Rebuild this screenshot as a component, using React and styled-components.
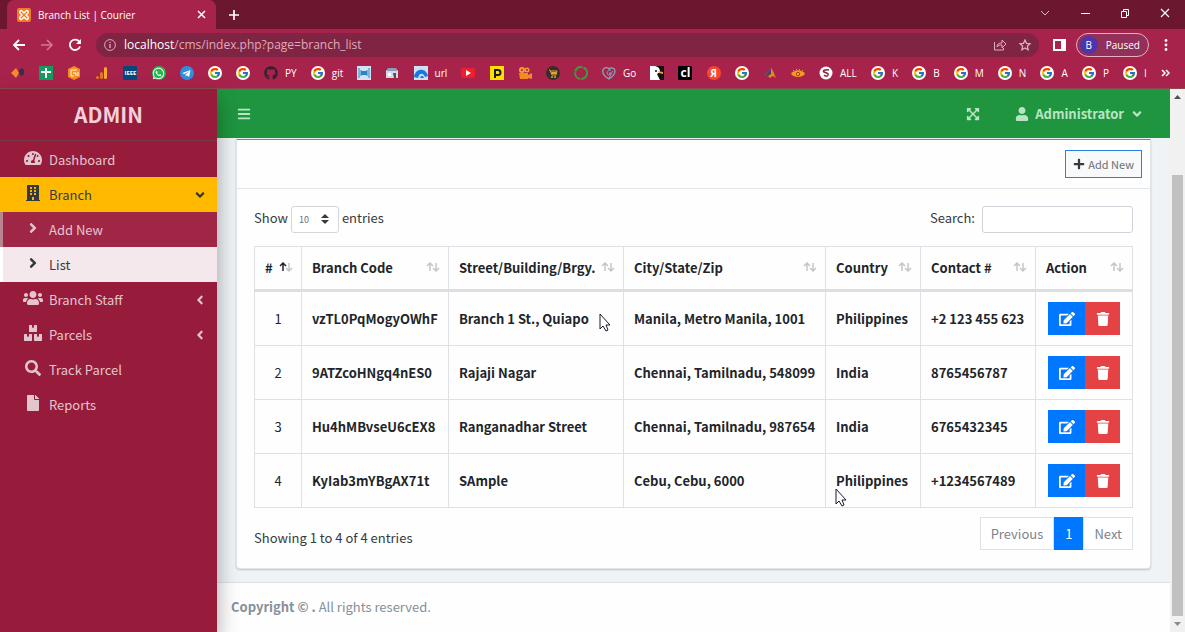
import React from "react";
import styled, { createGlobalStyle } from "styled-components";
import {
  FaAngleDown,
  FaAngleLeft,
  FaAngleRight,
  FaBars,
  FaBoxes,
  FaBuilding,
  FaEdit,
  FaExpandArrowsAlt,
  FaFile,
  FaGithub,
  FaPlus,
  FaSearch,
  FaTachometerAlt,
  FaTelegramPlane,
  FaTrash,
  FaUser,
  FaUsers,
  FaWhatsapp,
} from "react-icons/fa";
import { FcGoogle } from "react-icons/fc";

const GlobalStyle = createGlobalStyle`
  * {
    box-sizing: border-box;
  }
  body {
    margin: 0;
    font-family: "Noto Sans CJK SC", "Noto Sans", sans-serif;
    font-size: 13px;
    line-height: 20px;
    color: #343a40;
  }
  button, input, select {
    font-family: inherit;
    margin: 0;
  }
  a {
    text-decoration: none;
    color: inherit;
  }
`;

const Page = styled.div`
  min-height: 100vh;
  display: flex;
  flex-direction: column;
  position: relative;
  overflow: hidden;
`;

/* browser window */

const Chrome = styled.header`
  background-color: #a8234b;
  border-bottom: 1px solid #8c4a50;
  color: #fff;
  font-family: "Open Sans", "Noto Sans", sans-serif;
  font-size: 10px;
  line-height: 16px;
`;
const TitleBar = styled.div`
  display: flex;
  align-items: center;
  height: 29px;
  padding: 0 15px 0 7px;
  background-color: #6b172f;
`;
const Tab = styled.div`
  display: flex;
  align-items: center;
  gap: 7px;
  width: 209px;
  height: 29px;
  padding: 0 10px;
  border-radius: 7px 7px 0 0;
  background-color: #a8234b;
`;
const TabTitle = styled.span`
  flex: 1;
`;
const IconButton = styled.button`
  display: flex;
  align-items: center;
  justify-content: center;
  padding: 0;
  border: none;
  background: none;
  color: ${(props) => props.$color || "#fff"};
  cursor: pointer;
`;
const NewTab = styled(IconButton)`
  margin-left: 12px;
`;
const WindowControls = styled.div`
  display: flex;
  align-items: center;
  gap: 30px;
  margin-left: auto;
  margin-bottom: 4px;
`;
const Toolbar = styled.div`
  display: flex;
  align-items: center;
  gap: 14px;
  height: 32px;
  padding: 0 14px 0 12px;
`;
const AddressBar = styled.div`
  flex: 1;
  display: flex;
  align-items: center;
  gap: 8px;
  height: 24px;
  padding: 0 4px 0 8px;
  border-radius: 12px;
  background-color: #7f2443;
  color: #e0a9ba;
`;
const Address = styled.span`
  flex: 1;
  font-size: 12px;

  b {
    color: #fff;
    font-weight: 400;
  }
`;
const ToolbarRight = styled.div`
  display: flex;
  align-items: center;
  gap: 10px;
`;
const Profile = styled.button`
  display: flex;
  align-items: center;
  gap: 8px;
  height: 24px;
  padding: 0 8px 0 3px;
  border: 1px solid #e3b3c2;
  border-radius: 12px;
  background-color: #93305a;
  color: #fff;
  font-size: 10px;
`;
const Avatar = styled.span`
  width: 18px;
  height: 18px;
  border-radius: 50%;
  background-color: #4c35ad;
  font-size: 10px;
  line-height: 18px;
`;
const Bookmarks = styled.nav`
  display: flex;
  align-items: center;
  justify-content: space-between;
  height: 27px;
  padding: 0 15px 3px 11px;
`;
const Bookmark = styled.a`
  display: flex;
  align-items: center;
  gap: 7px;
`;
const Badge = styled.span`
  display: flex;
  align-items: center;
  justify-content: center;
  width: 14px;
  height: 14px;
  border-radius: ${(props) => (props.$round ? "50%" : "1px")};
  background-color: ${(props) => props.$bg || "transparent"};
  color: ${(props) => props.$color || "#fff"};
  font-size: ${(props) => props.$size || 11}px;
  font-weight: 700;
  line-height: 14px;
`;

/* application */

const Shell = styled.div`
  flex: 1;
  display: flex;
`;
const Sidebar = styled.aside`
  width: 217px;
  flex-shrink: 0;
  position: relative;
  z-index: 2;
  background-color: #971b3a;
  color: #e3c5ce;
  box-shadow: 0 10px 20px rgba(0, 0, 0, 0.35);
`;
const Brand = styled.h1`
  margin: 0 0 1px;
  height: 52px;
  border-bottom: 1px solid #793c47;
  color: #f3cfda;
  font-size: 21px;
  font-weight: 700;
  line-height: 50px;
  text-align: center;
`;
const NavList = styled.ul`
  margin: 0;
  padding: 0;
  list-style: none;
`;
const NavLink = styled.a`
  display: flex;
  align-items: center;
  gap: 6px;
  height: 35px;
  padding: 0 10px 0 23px;
  background-color: ${(props) => (props.$open ? "#ffba00" : "transparent")};
  color: ${(props) => (props.$open ? "#343a40" : "inherit")};
`;
const SubLink = styled(NavLink)`
  padding-left: 20px;
  border-left: 3px solid ${(props) => (props.$active ? "#fff" : "#b98591")};
  background-color: ${(props) => (props.$active ? "#f5e8ec" : "#9f2644")};
  color: ${(props) => (props.$active ? "#343a40" : "#e3c5ce")};
`;
const NavIcon = styled.span`
  display: flex;
  justify-content: center;
  width: 20px;
  margin-bottom: 3px;
  font-size: 16px;
`;
const NavText = styled.span`
  flex: 1;
`;
const Main = styled.main`
  flex: 1;
  min-width: 0;
  display: flex;
  flex-direction: column;
  background-color: #eff3f6;
`;
const Navbar = styled.div`
  display: flex;
  align-items: center;
  gap: 35px;
  height: 49px;
  padding: 0 26px 0 20px;
  background-color: #1f953f;
`;
const MenuButton = styled(IconButton)`
  margin-right: auto;
`;
const UserMenu = styled(IconButton)`
  gap: 6px;
  font-size: 13px;
  font-weight: 700;
`;
const Content = styled.section`
  padding: 1px 19px 13px;
`;
const Card = styled.div`
  border: 1px solid #dfe4e8;
  border-top: 1px solid #3d92d8;
  border-radius: 0 0 4px 4px;
  background-color: #fefefe;
  box-shadow: 0 1px 2px rgba(0, 0, 0, 0.2);
`;
const CardHeader = styled.div`
  display: flex;
  justify-content: flex-end;
  padding: 10px 8px;
  border-bottom: 1px solid #e4e7e9;
`;
const AddButton = styled.button`
  display: flex;
  align-items: center;
  gap: 3px;
  height: 28px;
  padding: 0 7px;
  border: 1px solid #2684e0;
  background-color: #f8f9fa;
  color: #6a6f74;
  font-size: 11px;
  line-height: 16px;

  svg {
    color: #343a40;
  }
`;
const CardBody = styled.div`
  padding: 17px 17px 18px;
`;
const Controls = styled.div`
  display: flex;
  justify-content: space-between;
  margin-bottom: 13px;
`;
const Field = styled.label`
  display: flex;
  gap: ${(props) => props.$gap || 3}px;
  line-height: 24px;
`;
const SelectBox = styled.span`
  display: flex;
  position: relative;

  svg {
    position: absolute;
    right: 10px;
    top: 8px;
    pointer-events: none;
  }
`;
const Select = styled.select`
  appearance: none;
  width: 48px;
  height: 27px;
  padding: 0 7px;
  border: 1px solid #d3d7db;
  border-radius: 3px;
  background-color: #fff;
  color: #6a6f74;
  font-size: 9px;
`;
const SearchInput = styled.input`
  width: 151px;
  height: 27px;
  border: 1px solid #ced4da;
  border-radius: 3px;
  background-color: #fff;
`;
const Table = styled.table`
  width: 100%;
  table-layout: fixed;
  border-collapse: collapse;
  border: 1px solid #dee2e6;
  color: #212529;
`;
const Col = styled.col`
  width: ${(props) => props.$width}px;
`;
const Th = styled.th`
  height: 44px;
  padding: 0 8px 0 10px;
  border: 1px solid #dee2e6;
  border-bottom: 3px solid #dcdfe1;
  text-align: left;
  white-space: nowrap;
`;
const ThInner = styled.span`
  display: flex;
  align-items: center;
  justify-content: space-between;
`;
const Td = styled.td`
  padding: 10px;
  border: 1px solid #dee2e6;
  font-weight: ${(props) => (props.$center ? 400 : 700)};
  text-align: ${(props) => (props.$center ? "center" : "left")};
  white-space: nowrap;
`;
const Actions = styled.div`
  display: flex;
  justify-content: center;
`;
const ActionButton = styled.button`
  display: flex;
  align-items: center;
  justify-content: center;
  width: ${(props) => (props.$danger ? 35 : 37)}px;
  height: 33px;
  padding: 0;
  border: none;
  background-color: ${(props) => (props.$danger ? "#e54245" : "#0077ff")};
  color: #fff;
  font-size: ${(props) => (props.$danger ? 14 : 16)}px;
  cursor: pointer;
`;
const TableFooter = styled.div`
  display: flex;
  align-items: center;
  justify-content: space-between;
  margin-top: 9px;
`;
const Info = styled.span`
  padding-top: 8px;
`;
const Pagination = styled.div`
  display: flex;
`;
const PageButton = styled.button`
  height: 33px;
  padding: 0 10px;
  border: 1px solid ${(props) => (props.$active ? "#0077ff" : "#dee2e6")};
  background-color: ${(props) => (props.$active ? "#0077ff" : "#fff")};
  color: ${(props) => (props.$active ? "#fff" : "#7d848b")};
  font-size: 13px;
`;
const Footer = styled.footer`
  flex: 1;
  padding: 14px;
  border-top: 1px solid #dee2e6;
  background-color: #fefefe;
  color: #869099;
`;
const Scrollbar = styled.div`
  display: flex;
  flex-direction: column;
  align-items: center;
  justify-content: space-between;
  width: 15px;
  padding: 6px 2px;
  background-color: #f1f1f1;
`;
const Thumb = styled.div`
  flex: 1;
  align-self: stretch;
  margin: 76px 0 6px;
  background-color: #c1c1c1;
`;
const Pointer = styled.svg`
  position: absolute;
  left: ${(props) => props.$x}px;
  top: ${(props) => props.$y}px;
  z-index: 3;
  pointer-events: none;
`;

const Google = () => (
  <Badge $round $bg="#fff">
    <FcGoogle size={12} />
  </Badge>
);

const Glyph = ({ children }) => (
  <svg width="14" height="14" viewBox="0 0 14 14" fill="none">
    {children}
  </svg>
);

const bookmarks = [
  { icon: <Glyph><path d="M0 7l5-5 3 5-3 5z" fill="#f58a2c" /><path d="M8 4l3-2 2 2v4l-2 2-3-2z" fill="#35304a" /></Glyph> },
  { icon: <Glyph><path d="M0 0h14v14H0z" fill="#129d60" /><path d="M6 2h2v3h4v2H8v5H6V7H2V5h4z" fill="#fff" /></Glyph> },
  { icon: <Glyph><path d="M7 0l6 3v8l-6 3-6-3V3z" fill="#fb8c1a" /><path d="M10 4H4v6h3M6 7h3v3M11 6v4" stroke="#fff" /></Glyph> },
  { icon: <Glyph><rect x="9" y="1" width="3" height="12" rx="1.5" fill="#f9ab2d" /><rect x="5" y="6" width="3" height="7" rx="1.5" fill="#e8761f" /><circle cx="2.500" cy="11.500" r="1.500" fill="#e8761f" /></Glyph> },
  { icon: <Badge $bg="#06477d" $size={6}>IEEE</Badge> },
  { icon: <Badge $round $bg="#25b84c"><FaWhatsapp size={13} /></Badge> },
  { icon: <Badge $round $bg="#2f8fe0"><FaTelegramPlane size={9} /></Badge> },
  { icon: <Google /> },
  { icon: <Google /> },
  { icon: <Badge $color="#33212f"><FaGithub size={14} /></Badge>, text: "PY" },
  { icon: <Google />, text: "git" },
  { icon: <Glyph><path d="M0 0h14v14H0z" fill="#cfe5f5" /><path d="M2 2v10M12 2v10M4 4v6M10 4v6" stroke="#2c83c6" /><path d="M4 5h6v4H4z" fill="#2c83c6" /></Glyph> },
  { icon: <Glyph><path d="M1 4h12v8H1z" fill="#d5d9e4" /><path d="M3 2h8l2 3H1z" fill="#8d9bb8" /><path d="M3 7h3v3H3z" fill="#fff" /><path d="M8 7h3v5H9z" fill="#46506b" /></Glyph> },
  { icon: <Glyph><path d="M0 0h14v14H0z" fill="#cfe0f3" /><path d="M0 11c1-9 12-10 14-1l-3 1c-2-5-6-4-7 1z" fill="#1878e0" /><path d="M6 12c1-3 3-3 4 0z" fill="#1878e0" /></Glyph>, text: "url" },
  { icon: <Glyph><rect y="2" width="14" height="10" rx="2" fill="#f11d2c" /><path d="M5 4l5 3-5 3z" fill="#fff" /></Glyph> },
  { icon: <Glyph><path d="M0 0h14v14H0z" fill="#ffe000" /><path d="M5 12V4h3a2 2 0 010 5H6" stroke="#1e1a14" strokeWidth="2" /></Glyph> },
  { icon: <Glyph><circle cx="4" cy="4" r="3" fill="#f0a02c" /><circle cx="9" cy="4" r="2.500" fill="#f0a02c" /><path d="M1 7h9v2l4-2v6l-4-1v1H2z" fill="#f28b21" /><circle cx="4" cy="4" r="1" fill="#a8234b" /><circle cx="9" cy="4" r="1" fill="#a8234b" /></Glyph> },
  { icon: <Glyph><circle cx="7" cy="7" r="7" fill="#382d2c" /><path d="M3 4h1l2 5h4l1-4H5" stroke="#e3a43a" /><path d="M5 6h5v2H6z" fill="#e3a43a" /><circle cx="6" cy="11" r="1" fill="#e3a43a" /><circle cx="9" cy="11" r="1" fill="#e3a43a" /></Glyph> },
  { icon: <Glyph><circle cx="7" cy="7" r="6" stroke="#3d9a40" strokeWidth="2" strokeDasharray="9 1" /></Glyph> },
  { icon: <Glyph><path d="M7 13C2 10 0 7 1 4c1-3 5-3 6-1 2-2 6-1 6 2 0 4-3 6-6 8z" stroke="#82a8bd" strokeWidth="1.300" /><path d="M9 4C5 3 4 9 7 9l2-2H7m4-2C9 7 9 9 7 12" stroke="#82a8bd" /></Glyph>, text: "Go" },
  { icon: <Glyph><path d="M0 0h14v14H0z" fill="#111" /><path d="M0 0h5c4 1 5 3 5 6l-3 2 3 6H0z" fill="#fff" /><path d="M8 5l5 1v2L9 7z" fill="#e6a73b" /><circle cx="6" cy="5" r="1" fill="#111" /></Glyph> },
  { icon: <Badge $bg="#000" $size={12}>cl</Badge> },
  { icon: <Badge $round $bg="#f8462f" $size={10}>Я</Badge> },
  { icon: <Google /> },
  { icon: <Glyph><path d="M1 8l4-2 3-4v6l-3 3z" fill="#3e658e" /><path d="M8 2l2 3 3 7-3-2-3 2-2-2z" fill="#ef8127" /><path d="M8 2v6l-3 2-2-1 3-3z" fill="#4d3d5c" /></Glyph> },
  { icon: <Glyph><path d="M0 8c3-5 11-5 14 0-3 4-11 4-14 0z" fill="#f29a1f" /><circle cx="7" cy="8" r="2" fill="#a5321f" /><circle cx="7" cy="8" r="1" fill="#ffd34d" /><path d="M2 4l1 1M5 3l1 1M9 3L8 4M12 4l-1 1" stroke="#f29a1f" /></Glyph> },
  { icon: <Glyph><circle cx="7" cy="7" r="6.500" fill="#fff" /><path d="M10 4C6 3 3 5 5 6s5 1 4 3-3 1-4 0" stroke="#8b2442" strokeWidth="1.500" /></Glyph>, text: "ALL" },
  { icon: <Google />, text: "K" },
  { icon: <Google />, text: "B" },
  { icon: <Google />, text: "M" },
  { icon: <Google />, text: "N" },
  { icon: <Google />, text: "A" },
  { icon: <Google />, text: "P" },
  { icon: <Google />, text: "I" },
];

const columns = [
  { title: "#", width: 47 },
  { title: "Branch Code", width: 147 },
  { title: "Street/Building/Brgy.", width: 175 },
  { title: "City/State/Zip", width: 202 },
  { title: "Country", width: 95 },
  { title: "Contact #", width: 115 },
  { title: "Action", width: 97 },
];

const branches = [
  ["vzTL0PqMogyOWhF", "Branch 1 St., Quiapo", "Manila, Metro Manila, 1001", "Philippines", "+2 123 455 623"],
  ["9ATZcoHNgq4nES0", "Rajaji Nagar", "Chennai, Tamilnadu, 548099", "India", "8765456787"],
  ["Hu4hMBvseU6cEX8", "Ranganadhar Street", "Chennai, Tamilnadu, 987654", "India", "6765432345"],
  ["KyIab3mYBgAX71t", "SAmple", "Cebu, Cebu, 6000", "Philippines", "+1234567489"],
];

const SortIcon = ({ sorted }) => (
  <svg width="14" height="12" viewBox="0 0 14 12" fill="none" strokeWidth="1.500">
    <path d="M10 1v8M7 6l3 3 3-3" stroke="#c3c6c8" />
    <path d="M4 9V1M1 4l3-3 3 3" stroke={sorted ? "#212529" : "#c3c6c8"} />
  </svg>
);

const MousePointer = ({ x, y }) => (
  <Pointer $x={x} $y={y} width="12" height="19" viewBox="0 0 12 19">
    <path
      d="M1 1v15l3-3 3 5 2-1-2-5h4z"
      fill="#fff"
      stroke="#1a1a2a"
      strokeWidth="1"
    />
  </Pointer>
);

function BrowserChrome() {
  return (
    <Chrome>
      <TitleBar>
        <Tab>
          <svg width="14" height="14" viewBox="0 0 14 14" fill="none">
            <rect width="14" height="14" rx="2" fill="#f37a20" />
            <path
              d="M5 7L3 5c-1-2 1-3 2-2l2 2 2-2c1-1 3 0 2 2L9 7l2 2c1 2-1 3-2 2L7 9l-2 2c-1 1-3 0-2-2z"
              stroke="#fff"
              strokeWidth="1.500"
            />
          </svg>
          <TabTitle>Branch List | Courier</TabTitle>
          <IconButton aria-label="Close tab">
            <svg width="9" height="9" viewBox="0 0 9 9" stroke="currentColor" strokeWidth="1.500">
              <path d="M1 1l7 7M8 1L1 8" />
            </svg>
          </IconButton>
        </Tab>
        <NewTab aria-label="New tab">
          <svg width="12" height="12" viewBox="0 0 12 12" stroke="currentColor" strokeWidth="1.700">
            <path d="M6 1v10M1 6h10" />
          </svg>
        </NewTab>
        <WindowControls>
          <IconButton aria-label="Search tabs" $color="#d9b8c2">
            <svg width="10" height="10" viewBox="0 0 10 10" fill="none" stroke="currentColor">
              <path d="M1 3l4 4 4-4" />
            </svg>
          </IconButton>
          <IconButton aria-label="Minimize">
            <svg width="10" height="10" viewBox="0 0 10 10" stroke="currentColor">
              <path d="M1 5.500h9" />
            </svg>
          </IconButton>
          <IconButton aria-label="Restore">
            <svg width="10" height="10" viewBox="0 0 10 10" fill="none" stroke="currentColor">
              <path d="M1.500 3.500h5v6h-5zM3.500 3V1.500h5v6H7" />
            </svg>
          </IconButton>
          <IconButton aria-label="Close">
            <svg width="10" height="10" viewBox="0 0 10 10" stroke="currentColor" strokeWidth="1.200">
              <path d="M1 1l8 8M9 1L1 9" />
            </svg>
          </IconButton>
        </WindowControls>
      </TitleBar>
      <Toolbar>
        <IconButton aria-label="Back">
          <svg width="14" height="14" viewBox="0 0 14 14" fill="none" stroke="currentColor" strokeWidth="1.800">
            <path d="M13 7H2M7 2L2 7l5 5" />
          </svg>
        </IconButton>
        <IconButton aria-label="Forward" $color="#d57a96">
          <svg width="14" height="14" viewBox="0 0 14 14" fill="none" stroke="currentColor" strokeWidth="1.500">
            <path d="M1 7h11M7 2l5 5-5 5" />
          </svg>
        </IconButton>
        <IconButton aria-label="Reload">
          <svg width="14" height="14" viewBox="0 0 14 14" fill="none">
            <path d="M11.500 4A5.200 5.200 0 1012 8.500" stroke="currentColor" strokeWidth="1.800" />
            <path d="M13 1v5H8z" fill="currentColor" />
          </svg>
        </IconButton>
        <AddressBar>
          <svg width="12" height="12" viewBox="0 0 12 12" fill="none" stroke="currentColor">
            <circle cx="6" cy="6" r="5.400" />
            <path d="M6 5v4M6 3v1" strokeWidth="1.400" />
          </svg>
          <Address>
            <b>localhost</b>/cms/index.php?page=branch_list
          </Address>
          <IconButton aria-label="Share" $color="#dcb0be">
            <svg width="14" height="12" viewBox="0 0 14 12" fill="none" stroke="currentColor">
              <path d="M1.500 3v8h9V9M4 8c0-3 2-4 5-4V1l4 4-4 4V6C7 6 5 6 4 8z" />
            </svg>
          </IconButton>
          <IconButton aria-label="Bookmark this page" $color="#dcb0be">
            <svg width="20" height="12" viewBox="-4 0 20 12" fill="none" stroke="currentColor" strokeWidth="1.300">
              <path d="M6 1l1.500 3.300 3.500.4-2.600 2.400.7 3.600L6 9l-3.100 1.700.7-3.600L1 4.700l3.500-.4z" />
            </svg>
          </IconButton>
        </AddressBar>
        <ToolbarRight>
          <IconButton aria-label="Side panel">
            <svg width="13" height="12" viewBox="0 0 13 12" fill="none">
              <path d="M1 1h11v10H1z" stroke="currentColor" strokeWidth="2" />
              <path d="M8 1h4v10H8z" fill="currentColor" />
            </svg>
          </IconButton>
          <Profile>
            <Avatar>B</Avatar>
            Paused
          </Profile>
          <IconButton aria-label="Menu">
            <svg width="12" height="14" viewBox="0 0 12 14" fill="currentColor">
              <circle cx="7" cy="2.500" r="1.400" />
              <circle cx="7" cy="7" r="1.400" />
              <circle cx="7" cy="11.500" r="1.400" />
            </svg>
          </IconButton>
        </ToolbarRight>
      </Toolbar>
      <Bookmarks>
        {bookmarks.map((item, index) => (
          <Bookmark href="#" key={index}>
            {item.icon}
            {item.text}
          </Bookmark>
        ))}
        <IconButton aria-label="More bookmarks">
          <svg width="9" height="8" viewBox="0 0 9 8" fill="none" stroke="currentColor" strokeWidth="1.500">
            <path d="M1 1l3 3-3 3M5 1l3 3-3 3" />
          </svg>
        </IconButton>
      </Bookmarks>
    </Chrome>
  );
}

function SideMenu() {
  return (
    <Sidebar>
      <Brand>ADMIN</Brand>
      <NavList>
        <li>
          <NavLink href="#">
            <NavIcon><FaTachometerAlt size={18} /></NavIcon>
            <NavText>Dashboard</NavText>
          </NavLink>
        </li>
        <li>
          <NavLink href="#" $open>
            <NavIcon><FaBuilding /></NavIcon>
            <NavText>Branch</NavText>
            <FaAngleDown size={14} />
          </NavLink>
          <NavList>
            <li>
              <SubLink href="#">
                <NavIcon><FaAngleRight /></NavIcon>
                <NavText>Add New</NavText>
              </SubLink>
            </li>
            <li>
              <SubLink href="#" $active>
                <NavIcon><FaAngleRight /></NavIcon>
                <NavText>List</NavText>
              </SubLink>
            </li>
          </NavList>
        </li>
        <li>
          <NavLink href="#">
            <NavIcon><FaUsers size={20} /></NavIcon>
            <NavText>Branch Staff</NavText>
            <FaAngleLeft size={14} />
          </NavLink>
        </li>
        <li>
          <NavLink href="#">
            <NavIcon><FaBoxes size={18} /></NavIcon>
            <NavText>Parcels</NavText>
            <FaAngleLeft size={14} />
          </NavLink>
        </li>
        <li>
          <NavLink href="#">
            <NavIcon><FaSearch /></NavIcon>
            <NavText>Track Parcel</NavText>
          </NavLink>
        </li>
        <li>
          <NavLink href="#">
            <NavIcon><FaFile /></NavIcon>
            <NavText>Reports</NavText>
          </NavLink>
        </li>
      </NavList>
    </Sidebar>
  );
}

function BranchTable() {
  return (
    <Table>
      <colgroup>
        {columns.map((column) => (
          <Col key={column.title} $width={column.width} />
        ))}
      </colgroup>
      <thead>
        <tr>
          {columns.map((column, index) => (
            <Th key={column.title}>
              <ThInner>
                {column.title}
                <SortIcon sorted={index === 0} />
              </ThInner>
            </Th>
          ))}
        </tr>
      </thead>
      <tbody>
        {branches.map((branch, index) => (
          <tr key={branch[0]}>
            <Td $center>{index + 1}</Td>
            {branch.map((value) => (
              <Td key={value}>{value}</Td>
            ))}
            <Td>
              <Actions>
                <ActionButton aria-label="Edit"><FaEdit /></ActionButton>
                <ActionButton aria-label="Delete" $danger><FaTrash /></ActionButton>
              </Actions>
            </Td>
          </tr>
        ))}
      </tbody>
    </Table>
  );
}

export default function App() {
  return (
    <Page>
      <GlobalStyle />
      <BrowserChrome />
      <Shell>
        <SideMenu />
        <Main>
          <Navbar>
            <MenuButton aria-label="Toggle menu" $color="#b9e5c4">
              <FaBars size={14} />
            </MenuButton>
            <IconButton aria-label="Full screen" $color="#b9e5c4">
              <FaExpandArrowsAlt size={14} />
            </IconButton>
            <UserMenu $color="#b9e5c4">
              <FaUser size={14} />
              Administrator
              <FaAngleDown size={14} />
            </UserMenu>
          </Navbar>
          <Content>
            <Card>
              <CardHeader>
                <AddButton>
                  <FaPlus size={12} />
                  Add New
                </AddButton>
              </CardHeader>
              <CardBody>
                <Controls>
                  <Field>
                    Show
                    <SelectBox>
                      <Select defaultValue="10">
                        <option>10</option>
                        <option>25</option>
                        <option>50</option>
                      </Select>
                      <svg width="8" height="10" viewBox="0 0 8 10" fill="#343a40">
                        <path d="M4 0l4 4H0zM4 10L0 6h8z" />
                      </svg>
                    </SelectBox>
                    entries
                  </Field>
                  <Field $gap={7}>
                    Search:
                    <SearchInput type="search" />
                  </Field>
                </Controls>
                <BranchTable />
                <TableFooter>
                  <Info>Showing 1 to 4 of 4 entries</Info>
                  <Pagination>
                    <PageButton>Previous</PageButton>
                    <PageButton $active>1</PageButton>
                    <PageButton>Next</PageButton>
                  </Pagination>
                </TableFooter>
              </CardBody>
            </Card>
          </Content>
          <Footer>
            <b>Copyright © .</b> All rights reserved.
          </Footer>
        </Main>
        <Scrollbar>
          <svg width="7" height="4" viewBox="0 0 7 4" fill="#505050">
            <path d="M0 4l3.500-4L7 4z" />
          </svg>
          <Thumb />
          <svg width="7" height="4" viewBox="0 0 7 4" fill="#8a8a8a">
            <path d="M0 0l3.500 4L7 0z" />
          </svg>
        </Scrollbar>
      </Shell>
      <MousePointer x={599} y={313} />
      <MousePointer x={835} y={488} />
    </Page>
  );
}
